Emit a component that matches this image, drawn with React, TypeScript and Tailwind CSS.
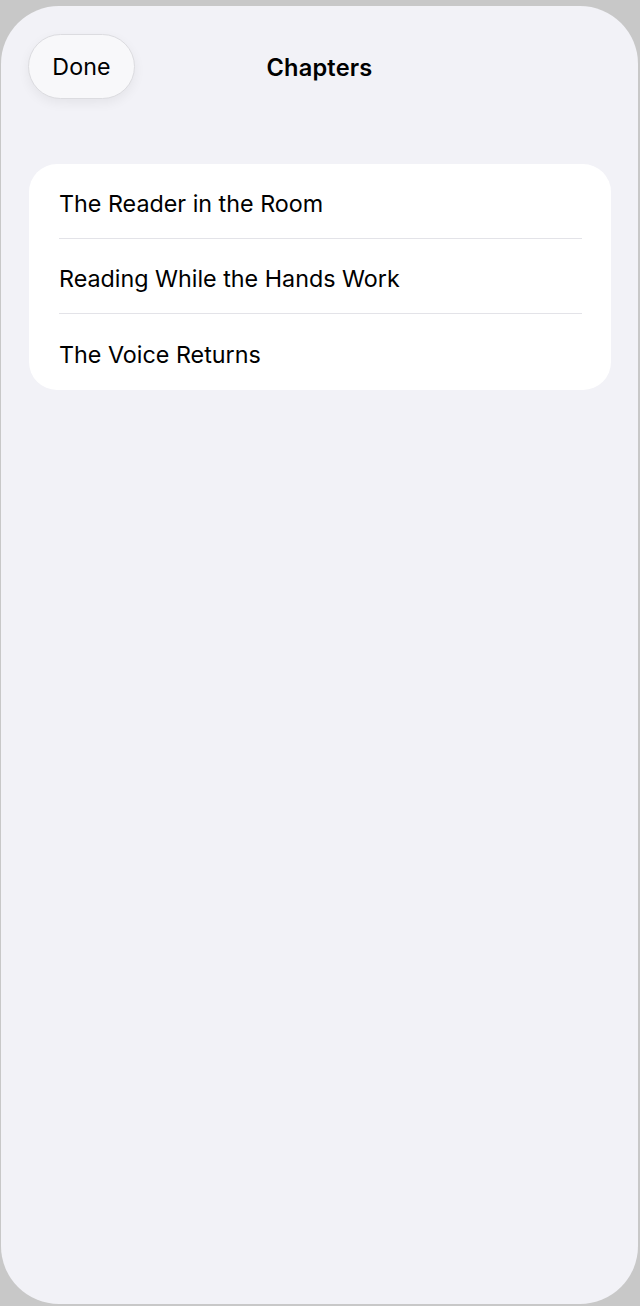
import React from "react";

const chapters = ["The Reader in the Room", "Reading While the Hands Work", "The Voice Returns"];

export default function App() {
  return (
    <div
      className="h-[1306px] w-[640px] bg-[#c8c8c8] pt-[6px] pl-[1px] pr-[2px] pb-[2px]"
      style={{ fontFamily: 'Inter, "Noto Sans", sans-serif' }}
    >
      <div className="h-full w-full rounded-[58px] bg-[#f2f2f7] pt-[28px] px-[27px]">
        <div className="grid h-[65px] grid-cols-[1fr_auto_1fr] items-center">
          <div>
            <button className="flex h-[65px] w-[107px] items-center justify-center rounded-full border border-[#dcdce0] bg-[#f8f8fa] pt-[2px] text-[23.2px] tracking-[0.1px] text-black shadow-[0_4px_12px_rgba(0,0,0,0.06)]">
              Done
            </button>
          </div>
          <div className="pt-[2px] text-[23.6px] font-semibold tracking-[0.2px] text-black">Chapters</div>
          <div />
        </div>
        <div className="mt-[65px] ml-[1px] rounded-[28px] bg-white pl-[30px]">
          {chapters.map((c, i) => (
            <div
              key={c}
              className={`flex items-center pr-[29px] ${i < chapters.length - 1 ? "h-[75px]" : "h-[76px]"}`}
            >
              <div
                className={`flex h-full w-full items-center pt-[6px] text-[23.3px] text-black ${
                  i < chapters.length - 1 ? "border-b border-[#e3e3e8]" : ""
                }`}
              >
                {c}
              </div>
            </div>
          ))}
        </div>
      </div>
    </div>
  );
}
